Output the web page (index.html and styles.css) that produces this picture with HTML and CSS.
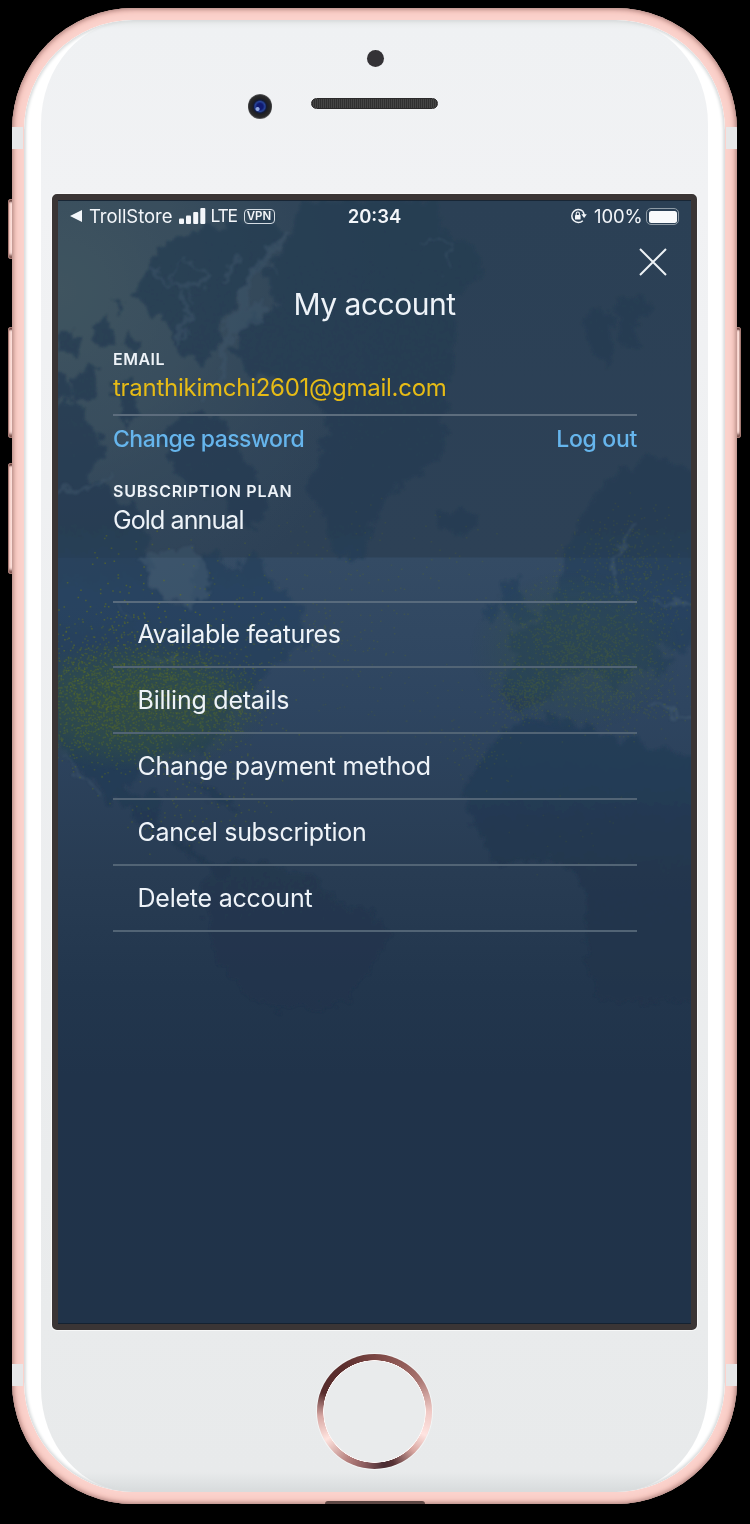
FILE: index.html
```html
<!DOCTYPE html>
<html lang="en">
<head>
<meta charset="utf-8">
<title>My account</title>
<link rel="stylesheet" href="styles.css">
</head>
<body>
<div class="stage">
  <i class="key key-mute"></i><i class="key key-up"></i><i class="key key-down"></i><i class="key key-power"></i>
  <div class="phone">
    <i class="band band-tl"></i><i class="band band-tr"></i><i class="band band-bl"></i><i class="band band-br"></i>
    <i class="jack"></i>
    <div class="shell">
      <div class="face">
        <header class="forehead">
          <i class="sensor"></i>
          <div class="ear"><i class="camera"></i><i class="speaker"></i></div>
        </header>
        <main class="screen">
          <svg class="map" viewBox="58 200 633 1123" preserveAspectRatio="none" aria-hidden="true">
            <defs>
              <linearGradient id="sea" x1="0" y1="0" x2="0" y2="1">
                <stop offset="0" stop-color="#2d4358"/><stop offset=".317" stop-color="#2f445a"/>
                <stop offset=".318" stop-color="#344b64"/><stop offset=".45" stop-color="#2e4560"/>
                <stop offset=".6" stop-color="#283c53"/><stop offset=".7" stop-color="#22364d"/><stop offset=".78" stop-color="#20334a"/><stop offset="1" stop-color="#203349"/>
              </linearGradient>
              <radialGradient id="haze" gradientUnits="userSpaceOnUse" cx="58" cy="290" r="340">
                <stop offset="0" stop-color="#4b6168" stop-opacity=".8"/><stop offset=".4" stop-color="#485e69" stop-opacity=".6"/><stop offset="1" stop-color="#40566a" stop-opacity="0"/>
              </radialGradient>
              <radialGradient id="traffic">
                <stop offset="0" stop-color="#345043" stop-opacity=".75"/><stop offset=".6" stop-color="#325047" stop-opacity=".6"/><stop offset="1" stop-color="#325047" stop-opacity="0"/>
              </radialGradient>
              <linearGradient id="land" gradientUnits="userSpaceOnUse" x1="0" y1="200" x2="0" y2="1000">
                <stop offset="0" stop-color="#273f56"/><stop offset=".4" stop-color="#263e56"/>
                <stop offset=".5" stop-color="#27435f"/><stop offset=".7" stop-color="#243c56"/><stop offset=".85" stop-color="#21364d"/><stop offset="1" stop-color="#21354c"/>
              </linearGradient>
              <filter id="coast" x="-5%" y="-5%" width="110%" height="110%">
                <feTurbulence type="fractalNoise" baseFrequency=".07" numOctaves="3" seed="8"/>
                <feDisplacementMap in="SourceGraphic" scale="22" xChannelSelector="R" yChannelSelector="G"/>
                <feGaussianBlur stdDeviation=".8"/>
              </filter>
            </defs>
            <rect x="58" y="200" width="633" height="1123" fill="url(#sea)"/>
            <rect x="58" y="200" width="633" height="500" fill="url(#haze)"/>
            <g filter="url(#coast)" fill="url(#land)" opacity=".8">
              <path d="M152 258L165 242L190 232L240 222L282 216L272 248L250 278L235 302L222 320L222 345L200 365L178 352L165 320L145 306L134 290Z"/>
              <path d="M262 270L285 242L300 200H435L442 228L480 250L484 270L462 285L450 300L455 335L450 380L444 415L445 450L420 472L385 498L372 530L355 566L336 550L322 520L310 490L318 460L330 425L315 400L290 385L250 375L232 350L245 320L280 302Z"/>
              <path d="M50 410L75 400L92 425L105 455L90 478L120 500L142 515L148 545L152 585L175 607L192 600L196 560L215 548L228 570L240 572L252 545L268 575L285 590L302 612L306 640L282 662L258 678L250 695L230 710L218 732L205 754L195 750L185 752L160 752L135 762L128 790L140 800L158 790L165 800L156 822L176 840L210 862L235 870L222 878L195 860L165 835L135 815L105 790L75 765L58 740H50Z"/>
              <path d="M158 435L178 415L205 408L228 425L240 452L258 472L265 505L255 530L235 522L225 500L198 492L175 470Z"/>
              <path d="M90 325L105 318L118 345L100 348ZM62 335L78 330L75 355L60 350ZM128 330L140 340L134 355L124 345ZM75 375L98 365L92 400L72 398ZM115 382L135 375L140 415L122 430ZM112 298L122 300L118 312ZM75 400L65 368L55 372V402Z"/>
              <path opacity=".7" d="M210 868L240 860L275 868L310 875L335 900L370 910L388 935L370 970L345 1000L310 1010L270 1010L240 990L210 940L200 895Z"/>
              <path d="M438 510L462 506L478 515L474 530L452 535L438 526Z"/>
              <path d="M582 318L600 306L612 312L614 335L608 370L592 348ZM612 302L640 292L654 305L644 315L632 325L640 350L624 345Z"/>
              <path d="M568 545L590 500L615 475L645 455L705 470V640L680 650L655 642L670 660L660 675L638 668L615 690L590 665L570 675L548 700L520 710L502 700L505 670L520 655L508 635L535 622L552 605L560 588L565 570Z"/>
              <path d="M505 605L500 585L512 575L522 595L532 615L512 625ZM484 602L498 600L496 618L482 615Z"/>
              <path d="M505 728L535 717L575 718L605 738L640 742L665 750L705 760V1000H600L585 960L588 900L575 870L545 858L500 865L472 825L465 790L482 755Z"/>
              <path d="M188 782L220 792L242 812L222 804Z"/>
            </g>
            <g filter="url(#coast)" fill="none" stroke="#435a70" opacity=".6">
              <path stroke-width="7" d="M282 235L255 270L238 310L225 345L220 375L205 400"/>
              <path fill="#435a70" stroke="none" d="M225 318L262 298L260 320L230 335ZM138 560L170 545L205 555L212 590L190 607L160 595Z"/>
              <path stroke-width="4" d="M150 265L168 284L198 286L205 270M180 290L188 315L178 345M240 255L225 280M58 490L95 485L112 470M180 660L165 658L150 662M620 590L612 560L635 525M655 600L690 605M650 705L690 720"/>
              <path stroke-width="2" d="M170 280L185 258L208 275M188 288L195 306M262 255L280 270M420 240L455 240L445 270M120 600L130 625M60 755L100 795"/>
            </g>
            <ellipse cx="135" cy="705" rx="135" ry="66" fill="url(#traffic)"/>
            <ellipse cx="575" cy="650" rx="105" ry="80" fill="url(#traffic)" opacity=".45"/>
            <g id="planes"></g>
            <rect x="58" y="200" width="633" height="357" fill="#273546" opacity=".18"/>
          </svg>
          <div class="status">
            <div class="status-left">
              <svg class="back" viewBox="0 0 12 12"><path d="M0 6L12 0V12Z"/></svg>
              <span class="carrier">TrollStore</span>
              <svg class="bars" viewBox="0 0 27 16"><rect x="0" y="10.500" width="5" height="5.500" rx="1"/><rect x="7" y="7.500" width="5" height="8.500" rx="1"/><rect x="14.200" y="4" width="5" height="12" rx="1"/><rect x="21.300" y="0" width="5" height="16" rx="1"/></svg>
              <span class="lte">LTE</span>
              <span class="vpn">VPN</span>
            </div>
            <span class="time">20:34</span>
            <div class="status-right">
              <svg class="lock" viewBox="0 0 17 16"><path d="M12.800 3.300A6.500 6.500 0 1 0 12.800 12.700" fill="none" stroke="#f3f6fa" stroke-width="1.500"/><path d="M11.400 6.200H16.800L14.100 9.900Z"/><path d="M12.600 3.200A6.500 6.500 0 0 1 14.100 7" fill="none" stroke="#f3f6fa" stroke-width="1.500"/><rect x="5" y="7" width="5.600" height="4.500" rx=".6"/><path d="M6.200 7V5.700A1.600 1.700 0 0 1 9.400 5.700V7" fill="none" stroke="#f3f6fa" stroke-width="1.100"/></svg>
              <span class="percent">100%</span>
              <i class="battery"></i>
            </div>
          </div>
          <div class="closebar"><svg class="close" viewBox="0 0 28 28"><path d="M1 1L27 27M27 1L1 27"/></svg></div>
          <h1 class="title">My account</h1>
          <section class="account">
            <div class="label email-label">EMAIL</div>
            <div class="email">tranthikimchi2601@gmail.com</div>
            <div class="actions"><span class="change">Change password</span><span class="logout">Log out</span></div>
            <div class="label">SUBSCRIPTION PLAN</div>
            <div class="plan">Gold annual</div>
          </section>
          <nav class="menu">
            <div class="item features">Available features</div>
            <div class="item">Billing details</div>
            <div class="item">Change payment method</div>
            <div class="item cancel">Cancel subscription</div>
            <div class="item">Delete account</div>
          </nav>
        </main>
        <footer class="chin"><i class="home"></i></footer>
      </div>
    </div>
  </div>
</div>
<script src="planes.js"></script>
</body>
</html>
```
FILE: styles.css
```css
* { box-sizing: border-box; }
body { margin: 0; background: #000; font-family: Inter, "Liberation Sans", sans-serif; color: #eef3f8; }
i { display: block; }
.stage { position: relative; width: 750px; height: 1524px; padding: 8px 12px 20px; overflow: hidden; background: #000; }
.phone {
  position: relative; width: 725px; height: 1496px; padding: 12px; border-radius: 122px; overflow: hidden;
  background: #fbd3cd;
  box-shadow: inset 0 0 4px 1px #a9827d, inset 0 0 8px 3px #f1bbb3;
}
.shell {
  position: relative; height: 1472px; border-radius: 110px; padding: 0 17px; overflow: hidden; background: #fff;
}
.shell::after { content: ""; position: absolute; inset: 0; border-radius: 110px; box-shadow: inset 0 0 3px 2px #d9dcdd; }
.face {
  height: 1472px; padding: 0 11px; border-radius: 92px / 104px; display: flex; flex-direction: column;
  background: linear-gradient(#e6e9e9 0, #eff1f3 9px, #f1f2f4 180px, #e9ebec 1300px, #e8eaeb 1452px, #d7dbdc 1472px);
}
.band { position: absolute; width: 11px; height: 22px; background: #e7e7e8; }
.band-tl { left: 0; top: 119px; } .band-tr { right: 0; top: 119px; }
.band-bl { left: 0; top: 1356px; } .band-br { right: 0; top: 1356px; }
.jack { position: absolute; left: 313px; bottom: 0; width: 100px; height: 3px; border-radius: 5px 5px 0 0; background: #5d4744; }
.key { position: absolute; left: 8px; width: 6px; border-radius: 2px; border: 1px solid #a57972; background: linear-gradient(90deg, #f0bdb5, #ffe3de 60%, #b78a84); box-shadow: inset 0 4px 2px -2px #69443f, inset 0 -5px 3px -2px #7c5550; }
.key-mute { top: 199px; height: 60px; } .key-up { top: 327px; height: 111px; } .key-down { top: 463px; height: 111px; }
.key-power { left: 735px; top: 327px; height: 111px; }
.forehead { height: 174px; display: flex; flex-direction: column; align-items: center; padding: 29.500px 0 0 2px; }
.sensor { width: 17px; height: 17px; border-radius: 50%; background: #343236; }
.ear { display: flex; align-items: center; gap: 38.500px; margin: 27.500px 258.500px 0 0; width: 191px; align-self: flex-end; }
.camera { flex: none; width: 24.500px; height: 24.500px; border-radius: 50%; background: radial-gradient(circle at 40% 60%, #8fa7e0 0 1.500px, transparent 2.500px), radial-gradient(circle, #101a70 0 3px, #28459b 5px, #141b38 6.500px, #202123 8px, #2b2b2d 11px, #68696a 12.500px); }
.speaker { flex: none; width: 127.500px; height: 11px; border-radius: 6px; border: 1.500px solid #2b2a2b; background: repeating-linear-gradient(90deg, #303030 0 1px, #454545 1px 2px); margin-top: -6px; }
.screen {
  position: relative; height: 1136px; flex: none; border: 6.500px solid #3a3535; border-radius: 5px; overflow: hidden;
  background: #20344a; display: flex; flex-direction: column; box-shadow: 0 0 0 1px #f7f8f8;
}
.map { position: absolute; inset: 0; width: 100%; height: 100%; border-top: 1px solid #182635; border-bottom: 1px solid #142231; }
.status, .closebar, .title, .account, .menu { position: relative; }
.status { height: 32px; display: grid; grid-template-columns: 1fr auto 1fr; align-items: center; padding: 0 12px; font-size: 18.500px; color: #f3f6fa; line-height: 24px; }
.status svg { fill: #f3f6fa; }
.status-left, .status-right { display: flex; align-items: center; }
.status-right { justify-content: flex-end; }
.back { width: 12px; height: 12px; margin-right: 7px; }
.carrier { width: 82.500px; margin-right: 7px; white-space: nowrap; letter-spacing: -.05px; }
.bars { width: 27px; height: 16px; margin-right: 5px; }
.lte { width: 27px; margin-right: 6px; font-size: 17.500px; letter-spacing: -1.200px; }
.vpn { width: 31px; height: 15px; border: 1.500px solid #d5dde4; border-radius: 4px; font-size: 11.500px; line-height: 12px; font-weight: 600; text-align: center; }
.time { font-weight: 600; font-size: 18.500px; letter-spacing: 0; }
.lock { width: 17px; height: 16px; margin-right: 7.500px; }
.percent { width: 48px; margin-right: 4px; letter-spacing: -.1px; }
.battery { width: 33px; height: 17px; border: 1.500px solid #8e9ba6; border-radius: 5px; padding: 1.500px; background: #f8fafc content-box; }
.closebar { height: 44px; display: flex; justify-content: flex-end; padding: 16px 24.500px 0 0; }
.close { width: 28px; height: 28px; fill: none; stroke: #edf2f6; stroke-width: 2; }
.title { margin: 5px 0 0; height: 46px; line-height: 46px; font-size: 30px; font-weight: 400; text-align: center; letter-spacing: -.5px; }
.account { height: 230px; padding: 20px 54px 0 55px; }
.label { height: 24px; line-height: 24px; font-size: 16px; font-weight: 600; letter-spacing: .75px; }
.email-label { letter-spacing: .5px; }
.email { height: 44.500px; line-height: 34px; font-size: 24px; letter-spacing: -.26px; color: #e6bb16; border-bottom: 2px solid #5d6d7d; }
.actions { height: 63.500px; padding-top: 6.500px; display: flex; justify-content: space-between; line-height: 34px; font-size: 23px; font-weight: 500; color: #66b5ec; }
.change { letter-spacing: -.53px; }
.logout { letter-spacing: -.3px; }
.plan { line-height: 34px; font-size: 25px; letter-spacing: -.9px; }
.menu { margin: 43.500px 54px 0 55px; border-top: 2px solid #596b7d; }
.item { height: 66.200px; border-bottom: 2px solid #526475; padding-left: 24.500px; line-height: 65px; font-size: 25px; letter-spacing: -.23px; }
.features { height: 65px; line-height: 62px; letter-spacing: -.37px; }
.cancel { letter-spacing: -.32px; }
.chin { display: flex; justify-content: center; padding-top: 24px; }
.home {
  width: 115px; height: 115px; border-radius: 50%; box-shadow: 0 0 0 1px #f4f5f5;
  background: radial-gradient(circle, #e9ebec 0 50px, #fff8f7 51px, transparent 51.500px),
    conic-gradient(#7a4643 0deg, #955f5b 35deg, #a97672 55deg, #f0c9c5 90deg, #ffe4e1 115deg, #d9a7a1 135deg, #573235 160deg, #4a2c32 170deg, #8a5b5d 190deg, #b88380 210deg, #ffe4df 240deg, #d8a8a4 265deg, #572c2c 290deg, #5b2e2d 325deg, #7a4643 360deg);
}
```
FILE: planes.js
```js
// Scatter of aircraft markers: [centre x, centre y, spread x, spread y, count, opacity]
const clusters = [
  [150, 700, 76, 44, 1500, .3],
  [95, 695, 45, 48, 800, .32],
  [205, 695, 42, 34, 400, .28],
  [130, 640, 70, 45, 150, .5],
  [110, 580, 55, 40, 45, .5],
  [230, 600, 60, 40, 45, .3],
  [320, 640, 60, 30, 130, .2],
  [380, 560, 90, 40, 90, .2],
  [200, 800, 60, 35, 110, .3],
  [400, 700, 80, 35, 60, .14],
  [575, 645, 54, 42, 1200, .18],
  [520, 695, 22, 20, 330, .2],
  [620, 690, 46, 30, 380, .18],
  [620, 560, 44, 38, 320, .2],
  [655, 610, 32, 40, 180, .2],
  [480, 750, 20, 25, 70, .18],
  [560, 830, 60, 30, 20, .12]
];
let seed = 41;
const random = () => (seed = (seed * 16807) % 2147483647) / 2147483647;
const spread = () => (random() + random() + random() - 1.5) * 1.35;
const layer = document.getElementById("planes");
for (const [cx, cy, sx, sy, count, opacity] of clusters) {
  let d = "";
  for (let i = 0; i < count; i++) {
    const x = cx + spread() * sx;
    const y = cy + spread() * sy;
    d += `M${x.toFixed(1)} ${y.toFixed(1)}h1.6v1.5h-1.6z`;
  }
  const path = document.createElementNS("http://www.w3.org/2000/svg", "path");
  path.setAttribute("d", d);
  path.setAttribute("fill", "#6b7a14");
  path.setAttribute("opacity", opacity);
  layer.append(path);
}
```
